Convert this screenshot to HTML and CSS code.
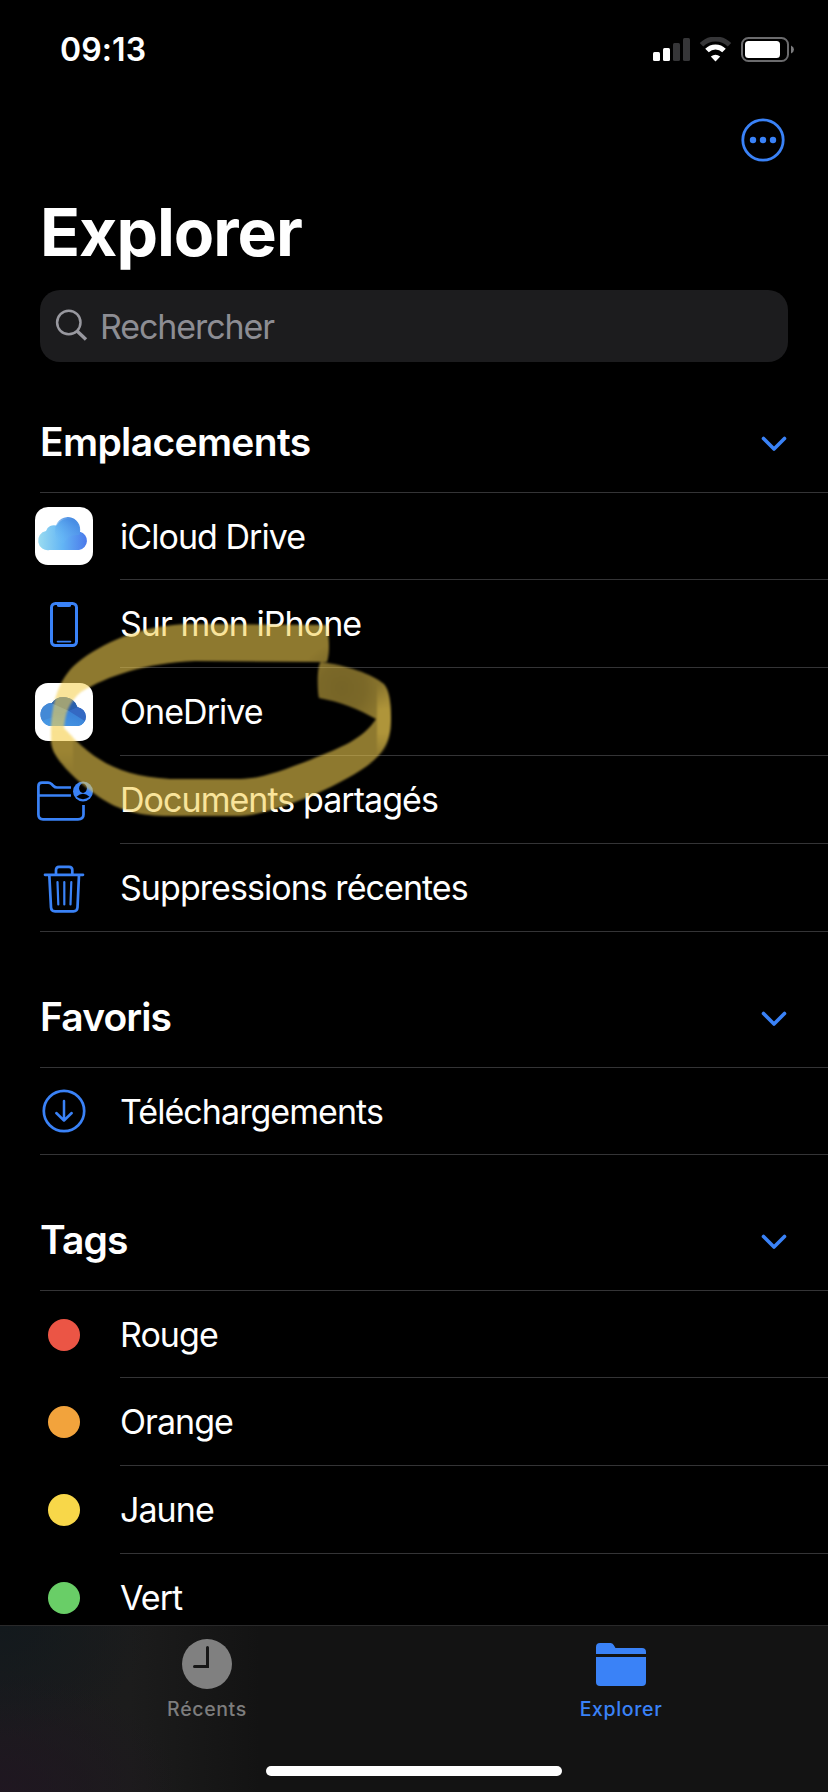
FILE: index.html
```html
<!DOCTYPE html>
<html lang="fr">
<head>
<meta charset="utf-8">
<title>Explorer</title>
<link rel="stylesheet" href="styles.css">
</head>
<body>
<div class="screen">
  <header class="status">
    <span class="time">09:13</span>
    <svg class="status-icons" width="142" height="28" viewBox="0 0 142 28">
      <g fill="#fff"><rect x="1" y="15" width="7" height="9" rx="1.5"/><rect x="11" y="11" width="7" height="13" rx="1.5"/></g>
      <g fill="#363638"><rect x="21" y="6" width="7" height="18" rx="1.5"/><rect x="31" y="1" width="7" height="23" rx="1.5"/></g>
      <g fill="none" stroke-width="5">
        <path d="M49.500 7.800A19.800 19.800 0 0 1 77.500 7.800" stroke="#363638"/>
        <path d="M55 13.500A12 12 0 0 1 72 13.500" stroke="#fff"/>
      </g>
      <path d="M63.500 24.500L58.800 19.500Q63.500 15.800 68.200 19.500Z" fill="#fff"/>
      <rect x="90" y="1" width="46" height="23" rx="6.500" fill="none" stroke="#6b6b6d" stroke-width="2"/>
      <rect x="93" y="4" width="35" height="17" rx="3.500" fill="#fff"/>
      <path d="M139 8.500Q142 10 142 12.500T139 16.500Z" fill="#7b7b7d"/>
    </svg>
  </header>
  <div class="toolbar">
    <svg width="44" height="44" viewBox="0 0 44 44"><circle cx="22" cy="22" r="20.200" fill="none" stroke="#3a82f7" stroke-width="2.800"/><g fill="#3a82f7"><circle cx="12" cy="22" r="3.200"/><circle cx="22" cy="22" r="3.200"/><circle cx="32" cy="22" r="3.200"/></g></svg>
  </div>
  <h1 class="title">Explorer</h1>
  <div class="search">
    <svg width="34" height="34" viewBox="0 0 34 34" fill="none" stroke="#98989f"><circle cx="13.800" cy="13.500" r="11.700" stroke-width="2.500"/><path d="M22 22L31 30.500" stroke-width="3.400"/></svg>
    <span>Rechercher</span>
  </div>

  <main class="sections">
    <section class="locations">
      <div class="section-head"><h2>Emplacements</h2><svg class="chevron" width="26" height="16" viewBox="0 0 26 16"><path d="M2.500 2.500L13 13L23.500 2.500"/></svg></div>
      <ul>
        <li><span class="icon"><span class="app">
          <svg width="58" height="58" viewBox="0 0 58 58">
            <defs>
              <linearGradient id="ic" x1="0" x2="1"><stop stop-color="#9bdcf0"/><stop offset=".5" stop-color="#63b5f5"/><stop offset="1" stop-color="#4b79ea"/></linearGradient>
              <linearGradient id="ic2" x1="0" y1="1" x2=".6" y2="0"><stop stop-color="#74c6fa" stop-opacity="0"/><stop offset="1" stop-color="#4489e2"/></linearGradient>
            </defs>
            <path d="M14.500 43A9.600 9.600 0 0 1 11 24A8.300 8.300 0 0 1 21.500 18.600A12.500 12.500 0 0 1 45 24.800A9.300 9.300 0 0 1 44 43Z" fill="url(#ic)"/>
            <path d="M20.500 20A12.500 12.500 0 1 1 44 28Q32 27 29 37Q18 33 20.500 20Z" fill="url(#ic2)"/>
          </svg></span></span><span class="label">iCloud Drive</span></li>
        <li><span class="icon"><svg class="phone" width="28" height="46" viewBox="0 0 28 46" fill="none" stroke="#3a82f7"><rect x="1.500" y="1.500" width="25" height="42" rx="4" stroke-width="3"/><path d="M7 2H21V3.500Q21 5 19 5H9Q7 5 7 3.500Z" fill="#3a82f7" stroke="none"/><path d="M7.500 39.600H20.500" stroke-width="1.600" stroke-linecap="round"/></svg></span><span class="label">Sur mon iPhone</span></li>
        <li><span class="icon"><span class="app">
          <svg width="58" height="58" viewBox="0 0 58 58">
            <defs><clipPath id="cloud"><path d="M17 43A11.500 11.500 0 0 1 17 20A14.500 14.500 0 0 1 42.500 24.200A9.500 9.500 0 0 1 43 43Z"/></clipPath>
            <linearGradient id="od" x1="0" y1="1" x2="1" y2="0"><stop stop-color="#4b9fe8"/><stop offset="1" stop-color="#367bd4"/></linearGradient></defs>
            <g clip-path="url(#cloud)"><rect width="58" height="58" fill="#3476cd"/><path d="M4 10H20L34 28L7 39L4 30Z" fill="#4389d6"/><path d="M16 10H46V24L34 28L16 20Z" fill="#285fad"/><path d="M7 38L34 28L51 38V45H7Z" fill="url(#od)"/><path d="M34 28L43 24L53 28V40Z" fill="#3469c3"/></g>
          </svg></span></span><span class="label">OneDrive</span></li>
        <li><span class="icon"><svg class="folder" width="58" height="42" viewBox="0 0 58 42" fill="none" stroke="#3a82f7" stroke-width="2.700">
          <path d="M36 7.500H22Q20 7.500 18.500 6L16.500 4Q15 2.700 13 2.700H7Q3.400 2.700 3.400 6.300V34.500Q3.400 39.300 8 39.300H43Q48.500 39.300 48.500 34.500V25M3.400 15.500H36"/>
          <circle cx="48" cy="11.500" r="10" fill="#3a82f7" stroke="none"/><ellipse cx="48" cy="8.200" rx="3.900" ry="4.700" fill="#000" stroke="none"/><path d="M41.500 16.800Q48 10.500 54.500 16.800Q48 21.500 41.500 16.800Z" fill="#000" stroke="none"/></svg></span><span class="label">Documents partagés</span></li>
        <li><span class="icon"><svg class="trash" width="42" height="48" viewBox="0 0 42 48" fill="none" stroke="#3a82f7" stroke-width="2.700" stroke-linecap="round" stroke-linejoin="round"><path d="M2 9.800H40M13 9.500V5Q13 1.800 16 1.800H26Q29.300 1.800 29.300 5V9.500M6.300 10L8 42.500Q8.200 46.300 12 46.300H30.500Q34.200 46.300 34.500 42.500L36 10"/><path d="M14.500 17L15.300 39.500M21.300 17V39.500M28.300 17L27.500 39.500" stroke-width="2.200"/></svg></span><span class="label">Suppressions récentes</span></li>
      </ul>
      <svg class="marker" width="360" height="220" viewBox="40 610 360 220">
        <defs>
          <radialGradient id="ink" gradientUnits="userSpaceOnUse" cx="342" cy="688" r="46"><stop stop-color="#f6d151" stop-opacity=".48"/><stop offset=".5" stop-color="#f6d151" stop-opacity=".5"/><stop offset="1" stop-color="#f6d151" stop-opacity=".58"/></radialGradient>
          <linearGradient id="turn" x1="0" y1="0" x2="0" y2="1"><stop stop-color="#f6d151" stop-opacity="0"/><stop offset=".35" stop-color="#f6d151" stop-opacity=".32"/><stop offset=".65" stop-color="#f6d151" stop-opacity=".32"/><stop offset="1" stop-color="#f6d151" stop-opacity="0"/></linearGradient>
        </defs>
        <path fill="url(#ink)" d="M327 625L190 624C145 625 110 639 82 659C58 676 50 704 51 742C52 758 75 780 99 797C120 811 140 816 170 816L240 816C265 816 330 792 367 766C386 752 391 738 391 718C391 700 389 690 384 684C372 674 346 665 321 662C317 664 317 690 319 698C341 702 358 709 376 719C363 739 342 747 310 760C281 771 260 779 240 779L170 779C118 776 93 760 64 728C65 714 69 702 81 692C108 676 145 663 195 661L327 662Q331 650 327 625Z"/>
        <path fill="url(#turn)" d="M377 684L385 685Q391 696 391 720Q391 742 383 753L377 758Z"/>
        <path fill="url(#turn)" d="M52 710Q50 735 53 752L73 772L73 736L64 728L66 712Z" opacity=".4"/>
      </svg>
    </section>
    <section>
      <div class="section-head"><h2>Favoris</h2><svg class="chevron" width="26" height="16" viewBox="0 0 26 16"><path d="M2.500 2.500L13 13L23.500 2.500"/></svg></div>
      <ul>
        <li><span class="icon"><svg width="44" height="44" viewBox="0 0 44 44" fill="none" stroke="#3a82f7" stroke-width="2.700" stroke-linecap="round" stroke-linejoin="round"><circle cx="22" cy="22" r="20.200"/><path d="M22 12V31M14.300 24L22 31.500L29.700 24" stroke-width="2.500"/></svg></span><span class="label">Téléchargements</span></li>
      </ul>
    </section>
    <section>
      <div class="section-head"><h2>Tags</h2><svg class="chevron" width="26" height="16" viewBox="0 0 26 16"><path d="M2.500 2.500L13 13L23.500 2.500"/></svg></div>
      <ul>
        <li><span class="icon"><i class="dot red"></i></span><span class="label">Rouge</span></li>
        <li><span class="icon"><i class="dot orange"></i></span><span class="label">Orange</span></li>
        <li><span class="icon"><i class="dot yellow"></i></span><span class="label">Jaune</span></li>
        <li><span class="icon"><i class="dot green"></i></span><span class="label">Vert</span></li>
      </ul>
    </section>
  </main>

  <nav class="tabs">
    <div class="tab"><svg width="50" height="50" viewBox="0 0 50 50"><circle cx="25" cy="25" r="25" fill="#808080"/><path d="M25.500 8.500V27.500H12.500" fill="none" stroke="#171717" stroke-width="3" stroke-linecap="round"/></svg><span>Récents</span></div>
    <div class="tab active"><svg width="50" height="50" viewBox="0 0 50 50" fill="#3a82f7"><path d="M0 15V8Q0 4 4 4H14.500Q16.500 4 17.700 6L19.500 9H46Q50 9 50 13V15Z"/><path d="M0 18H50V43Q50 47 46 47H4Q0 47 0 43Z"/></svg><span>Explorer</span></div>
    <div class="home"></div>
  </nav>
</div>
</body>
</html>
```
FILE: styles.css
```css
* { box-sizing: border-box; }
body { margin: 0; background: #000; color: #fff; font-family: Inter, "Liberation Sans", sans-serif; }
h1, h2, ul { margin: 0; padding: 0; }
ul { list-style: none; }
svg { display: block; flex: none; }
.screen { width: 828px; height: 1792px; overflow: hidden; display: flex; flex-direction: column; }
.status { height: 100px; flex: none; display: flex; justify-content: space-between; padding: 31px 34px 0 60px; }
.time { font-size: 32px; line-height: 38px; font-weight: 600; letter-spacing: 0.1px; }
.status-icons { margin-top: 6px; }
.toolbar { height: 86px; flex: none; display: flex; justify-content: flex-end; padding: 18px 43px 0 0; }
.title { height: 104px; flex: none; padding-left: 40px; font-size: 66px; line-height: 92px; font-weight: 700; letter-spacing: -1px; }
.search { height: 72px; flex: none; margin: 0 40px; padding: 0 15px; border-radius: 20px; background: #1c1c1e; display: flex; align-items: center; gap: 11px; font-size: 34px; color: #8d8d93; letter-spacing: -1.1px; }
.sections { flex: 1; min-height: 0; overflow: hidden; }
section { position: relative; }
.section-head { height: 136px; margin-left: 40px; padding: 0 41px 26px 0; border-bottom: 1px solid #343436; display: flex; justify-content: space-between; align-items: flex-end; }
.locations .section-head { height: 131px; }
h2 { font-size: 39px; line-height: 48px; font-weight: 600; letter-spacing: -0.9px; }
.locations h2 { letter-spacing: -0.65px; }
.chevron { fill: none; stroke: #3a82f7; stroke-width: 3.6; stroke-linecap: round; stroke-linejoin: round; margin-bottom: 14px; }
li { height: 88px; display: flex; }
li:first-child { height: 87px; }
.icon { width: 112px; padding-left: 16px; margin-right: 8px; display: flex; align-items: center; justify-content: center; }
.label { flex: 1; border-bottom: 1px solid #343436; font-size: 34px; line-height: 88px; letter-spacing: -0.95px; }
li:first-child .label { line-height: 87px; }
li:first-child .app { margin-bottom: 1px; }
li:last-child { margin-left: 40px; border-bottom: 1px solid #343436; }
li:last-child .icon { width: 72px; padding-left: 0; margin-left: -12px; margin-right: 20px; }
li:last-child .label { border-bottom: 0; }
.phone, .folder, .trash { margin-top: 2px; }
.app { width: 58px; height: 58px; border-radius: 13px; background: #fff; overflow: hidden; }
.dot { width: 32px; height: 32px; border-radius: 50%; }
.red { background: #eb5545; }
.orange { background: #f2a33c; }
.yellow { background: #f8d749; }
.green { background: #69ce67; }
.marker { position: absolute; left: 40px; top: 248px; filter: blur(.9px); }
.tabs { height: 167px; flex: none; border-top: 1px solid #29292a; background: radial-gradient(ellipse 150px 110px at 0 0, rgba(18,25,29,.9), transparent), radial-gradient(ellipse 180px 120px at 0 100%, rgba(32,22,33,.9), transparent), linear-gradient(90deg, #1a1b1d, #1c1c1c 130px, #131313 260px); display: grid; grid-template-columns: 1fr 1fr; grid-template-rows: 1fr auto; }
.tab { display: flex; flex-direction: column; align-items: center; padding-top: 13px; gap: 7px; font-size: 19.5px; line-height: 26px; font-weight: 500; letter-spacing: .65px; color: #7d7d7d; }
.active { color: #3a82f7; }
.home { grid-column: 1 / 3; justify-self: center; width: 296px; height: 10px; border-radius: 5px; background: #fff; margin-bottom: 16px; }
```
